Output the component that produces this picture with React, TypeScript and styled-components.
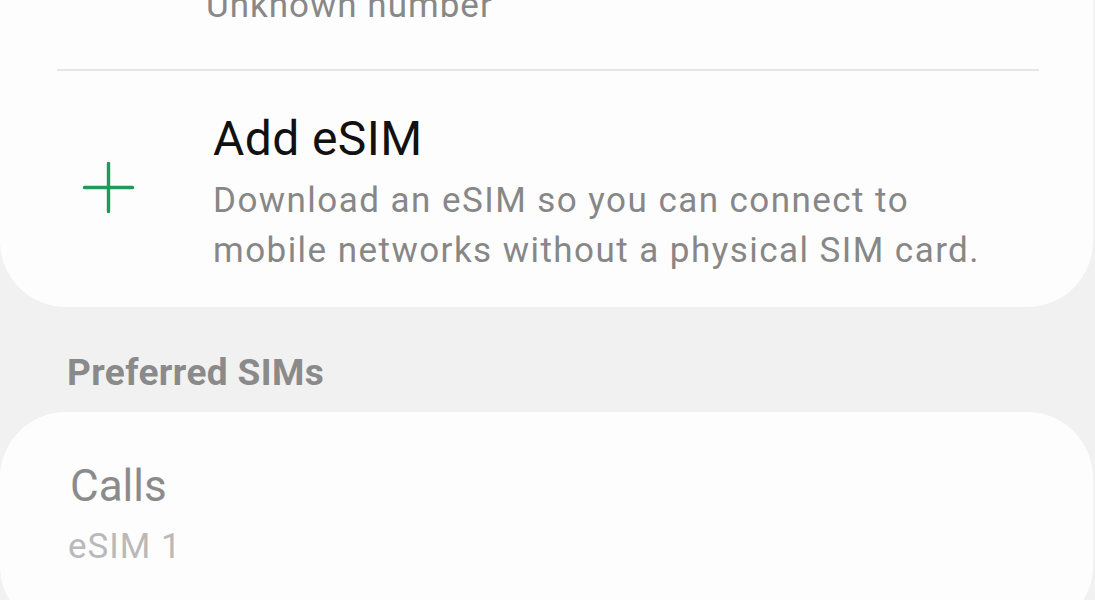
import React from "react";
import styled, { createGlobalStyle } from "styled-components";

const GlobalStyle = createGlobalStyle`
  html, body {
    margin: 0;
    padding: 0;
    background: #f1f1f1;
  }
  body {
    font-family: Roboto, "Noto Sans", "Liberation Sans", sans-serif;
    -webkit-font-smoothing: antialiased;
  }
`;

const Screen = styled.div`
  width: 1095px;
  height: 600px;
  overflow: hidden;
  background: #f1f1f1;
`;

const List = styled.div`
  display: flex;
  flex-direction: column;
  margin-top: -19px;
  padding-right: 2px;
`;

const Card = styled.div<{ $bottomPad?: number }>`
  background: #fdfdfd;
  border-radius: 66px;
  padding-bottom: ${({ $bottomPad }) => $bottomPad ?? 0}px;
`;

const TopCard = styled(Card)`
  border-top-left-radius: 0;
  border-top-right-radius: 0;
`;

const SubText = styled.div<{ $indent?: number; $tone?: "mid" | "light" }>`
  font-size: 35px;
  line-height: 50px;
  letter-spacing: 1px;
  color: ${({ $tone }) => ($tone === "light" ? "#b9b9b9" : "#888888")};
  padding-left: ${({ $indent }) => $indent ?? 0}px;
  white-space: nowrap;
`;

const UnknownRow = styled.div`
  padding-bottom: 38px;
`;

const Divider = styled.div`
  height: 2px;
  background: #e6e6e6;
  margin: 0 54px 0 57px;
`;

const ActionRow = styled.div`
  display: flex;
  align-items: center;
  padding-top: 40px;
`;

const IconCell = styled.div`
  width: 213px;
  flex-shrink: 0;
  display: flex;
  justify-content: flex-start;
  padding-left: 83px;
  box-sizing: border-box;
  margin-bottom: 12px;
`;

const TextCol = styled.div`
  display: flex;
  flex-direction: column;
`;

const Title = styled.div<{ $muted?: boolean }>`
  font-size: ${({ $muted }) => ($muted ? 44 : 48)}px;
  line-height: 56px;
  letter-spacing: ${({ $muted }) => ($muted ? 0 : 0.4)}px;
  color: ${({ $muted }) => ($muted ? "#8b8b8b" : "#111111")};
`;

const Description = styled.div`
  font-size: 35px;
  line-height: 50px;
  letter-spacing: 1.45px;
  color: #878787;
  margin-top: 9px;
  width: 860px;
  white-space: nowrap;
`;

const SectionHeader = styled.div`
  font-size: 37px;
  font-weight: 700;
  line-height: 50px;
  letter-spacing: 0.4px;
  color: #8a8a8a;
  padding: 41px 0 14px 67px;
`;

const PrefRow = styled.div`
  display: flex;
  flex-direction: column;
  padding: 46px 0 0 70px;
`;

const PrefSub = styled(SubText)`
  margin-top: 8px;
  padding-left: 0;
  margin-left: -2px;
`;

const PlusIcon = () => (
  <svg width="51" height="51" viewBox="0 0 51 51">
    <path
      d="M25.5 1.5V49.5M1.5 25.5H49.5"
      stroke="#1f9a5b"
      strokeWidth="3.4"
      strokeLinecap="round"
      fill="none"
    />
  </svg>
);

export default function App() {
  return (
    <>
      <GlobalStyle />
      <Screen>
        <List>
          <TopCard $bottomPad={31}>
            <UnknownRow>
              <SubText $indent={206}>Unknown number</SubText>
            </UnknownRow>
            <Divider />
            <ActionRow>
              <IconCell>
                <PlusIcon />
              </IconCell>
              <TextCol>
                <Title>Add eSIM</Title>
                <Description>
                  Download an eSIM so you can connect to
                  <br />
                  mobile networks without a physical SIM card.
                </Description>
              </TextCol>
            </ActionRow>
          </TopCard>
          <SectionHeader>Preferred SIMs</SectionHeader>
          <Card $bottomPad={60}>
            <PrefRow>
              <Title $muted>Calls</Title>
              <PrefSub $tone="light">eSIM 1</PrefSub>
            </PrefRow>
          </Card>
        </List>
      </Screen>
    </>
  );
}
